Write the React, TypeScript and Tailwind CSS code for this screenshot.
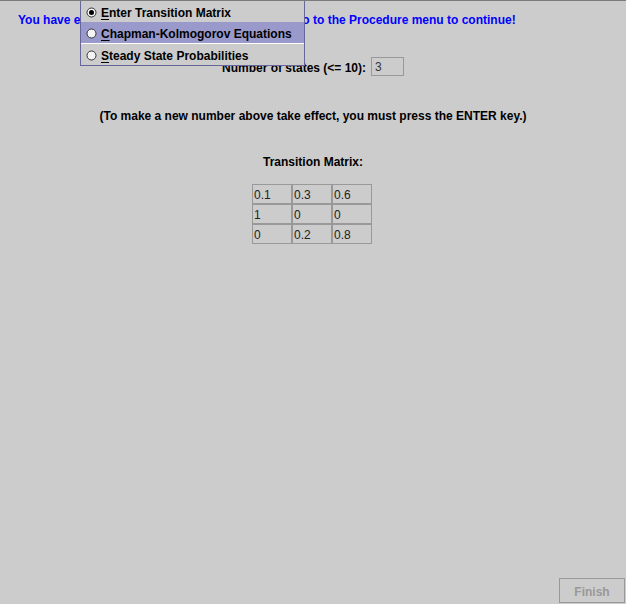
import React from 'react'

const rows = [
  ['0.1', '0.3', '0.6'],
  ['1', '0', '0'],
  ['0', '0.2', '0.8'],
]

const items = [
  { key: 'E', rest: 'nter Transition Matrix', checked: true, active: false },
  { key: 'C', rest: 'hapman-Kolmogorov Equations', checked: false, active: true },
  { key: 'S', rest: 'teady State Probabilities', checked: false, active: false },
]

function Radio({ checked }: { checked: boolean }) {
  return (
    <svg width="11" height="11" viewBox="0 0 11 11" className="shrink-0">
      <circle cx="5.5" cy="5.5" r="4.5" fill="#f4f4f4" stroke="#333" strokeWidth="1" />
      {checked && <circle cx="5.5" cy="5.5" r="2.5" fill="#000" />}
    </svg>
  )
}

export default function App() {
  return (
    <div className="relative flex h-[604px] w-[626px] flex-col overflow-hidden border-t border-[#7a7a7a] bg-[#cccccc] font-['Liberation_Sans',Arial,sans-serif] text-[12px] text-black">
      {/* message runs under the popup menu */}
      <p className="mt-[12px] ml-[18px] whitespace-nowrap text-[12px] leading-[14px] font-bold text-[#0000ff]">
        <span className="inline-block w-[277px] overflow-hidden align-bottom">You have entered the transition matrix. Now</span>
        go to the Procedure menu to continue!
      </p>

      <div className="mt-[30px] flex items-center justify-center gap-[5px]">
        <span className="mt-[2px] text-[12px] leading-[14px] font-bold">Number of states (&lt;= 10):</span>
        <div className="flex h-[19px] w-[33px] items-center border border-[#999999] pl-[3px] text-[12px] text-[#333]">3</div>
      </div>

      <p className="mt-[33px] text-center text-[12px] leading-[14px] font-bold">
        (To make a new number above take effect, you must press the ENTER key.)
      </p>

      <p className="mt-[32px] text-center text-[12px] leading-[14px] font-bold">Transition Matrix:</p>

      <div className="mt-[15px] ml-[252px] grid grid-cols-[repeat(3,40px)] self-start">
        {rows.flat().map((v, i) => (
          <div key={i} className="flex h-[20px] items-center border border-[#999999] pt-[1px] pl-[1px] text-[12px] text-[#222]">
            {v}
          </div>
        ))}
      </div>

      <button className="mt-auto mr-[1px] mb-[1px] h-[25px] w-[66px] self-end border border-[#999999] pt-[2px] text-[12px] font-bold text-[#999999]">
        Finish
      </button>

      <div className="absolute top-0 left-[80px] w-[225px] border-x border-b border-[#666699] bg-[#cccccc]">
        {items.map((it) => (
          <div
            key={it.key}
            className={
              'flex items-center gap-[4px] pt-[2px] pl-[5px] ' +
              (it.active ? 'h-[22px] border-b border-white bg-[#9999cc]' : 'h-[21px]')
            }
          >
            <Radio checked={it.checked} />
            <span className="text-[12px] leading-[14px] font-bold whitespace-nowrap">
              <span className="underline underline-offset-2">{it.key}</span>
              {it.rest}
            </span>
          </div>
        ))}
      </div>
    </div>
  )
}
